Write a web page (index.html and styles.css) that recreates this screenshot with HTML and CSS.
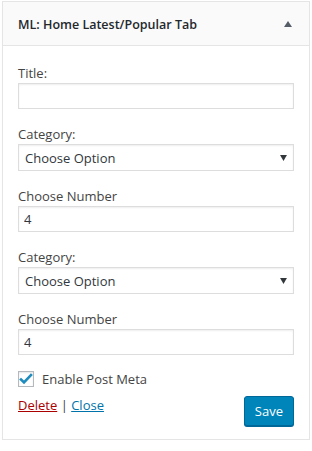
FILE: index.html
```html
<!DOCTYPE html>
<html lang="en">
<head>
  <meta charset="UTF-8">
  <title>ML: Home Latest/Popular Tab</title>
  <link rel="stylesheet" href="styles.css">
</head>
<body>
  <div class="widget">
    <div class="widget-top">
      <h3>ML: Home Latest/Popular Tab</h3>
      <span class="toggle-arrow"></span>
    </div>

    <div class="widget-inside">
      <div class="field">
        <label for="title">Title:</label>
        <input type="text" id="title" class="input">
      </div>

      <div class="field">
        <label>Category:</label>
        <div class="select">Choose Option</div>
      </div>

      <div class="field">
        <label for="num-1">Choose Number</label>
        <input type="text" id="num-1" class="input" value="4">
      </div>

      <div class="field">
        <label>Category:</label>
        <div class="select">Choose Option</div>
      </div>

      <div class="field">
        <label for="num-2">Choose Number</label>
        <input type="text" id="num-2" class="input" value="4">
      </div>

      <div class="check-row">
        <span class="checkbox">
          <svg width="14" height="14" viewBox="0 0 14 14">
            <path d="M2 7.5l3 3L12 3" fill="none" stroke="#1e8cbe" stroke-width="2.6" stroke-linecap="square"/>
          </svg>
        </span>
        Enable Post Meta
      </div>

      <div class="widget-control">
        <div class="links">
          <a href="#" class="link-delete">Delete</a> | <a href="#" class="link-close">Close</a>
        </div>
        <button class="btn-save">Save</button>
      </div>
    </div>
  </div>
</body>
</html>
```

FILE: styles.css
```css
* {
  box-sizing: border-box;
}

body {
  margin: 0;
  padding: 1px 0 0 2px;
  background: #fff;
  color: #23282d;
  font-family: "Open Sans", "Noto Sans", sans-serif;
  font-size: 13px;
}

.widget {
  width: 308px;
  border: 1px solid #e5e5e5;
  background: #fff;
  box-shadow: 0 1px 1px rgba(0, 0, 0, 0.04);
}

.widget-top {
  display: flex;
  align-items: center;
  justify-content: space-between;
  height: 44px;
  padding: 1px 17px 0 15px;
  background: #fafafa;
  border-bottom: 1px solid #e5e5e5;
}

.widget-top h3 {
  margin: 0;
  font-size: 12.5px;
  font-weight: 600;
  color: #23282d;
}

.toggle-arrow {
  width: 0;
  height: 0;
  border-left: 4px solid transparent;
  border-right: 4px solid transparent;
  border-bottom: 6px solid #555d66;
}

.widget-inside {
  padding: 18px 15px 13px;
}

.field {
  margin-bottom: 16px;
}

.field label {
  display: block;
  line-height: 18px;
  margin-bottom: 1px;
  color: #444;
}

.input {
  display: block;
  width: 100%;
  height: 26px;
  padding: 2px 5px;
  border: 1px solid #ddd;
  box-shadow: inset 0 1px 2px rgba(0, 0, 0, 0.07);
  font-family: inherit;
  font-size: 13px;
  color: #32373c;
  outline: none;
}

.select {
  display: flex;
  align-items: center;
  height: 27px;
  padding: 0 6px;
  border: 1px solid #ddd;
  box-shadow: inset 0 1px 2px rgba(0, 0, 0, 0.07);
  color: #32373c;
  background-image: url("data:image/svg+xml;charset=UTF-8,%3csvg xmlns='http://www.w3.org/2000/svg' viewBox='0 0 8 7'%3e%3cpolygon points='0,0 8,0 4,7' fill='%2332373c'/%3e%3c/svg%3e");
  background-repeat: no-repeat;
  background-position: right 6px center;
  background-size: 7px 6px;
}

.check-row {
  display: flex;
  align-items: center;
  gap: 8px;
  height: 16px;
  margin-top: 7px;
  color: #444;
}

.checkbox {
  display: flex;
  align-items: center;
  justify-content: center;
  width: 16px;
  height: 16px;
  border: 1px solid #b4b9be;
  box-shadow: inset 0 1px 2px rgba(0, 0, 0, 0.1);
}

.widget-control {
  display: flex;
  justify-content: space-between;
  align-items: flex-start;
  margin-top: 9px;
}

.links {
  line-height: 18px;
  color: #444;
}

.link-delete {
  color: #a00;
}

.link-close {
  color: #0073aa;
}

.btn-save {
  height: 30px;
  padding: 0 10px;
  border: 1px solid #006799;
  border-radius: 3px;
  background: #0085ba;
  box-shadow: 0 1px 0 #006799;
  color: #fff;
  font-family: inherit;
  font-size: 13px;
}
```
